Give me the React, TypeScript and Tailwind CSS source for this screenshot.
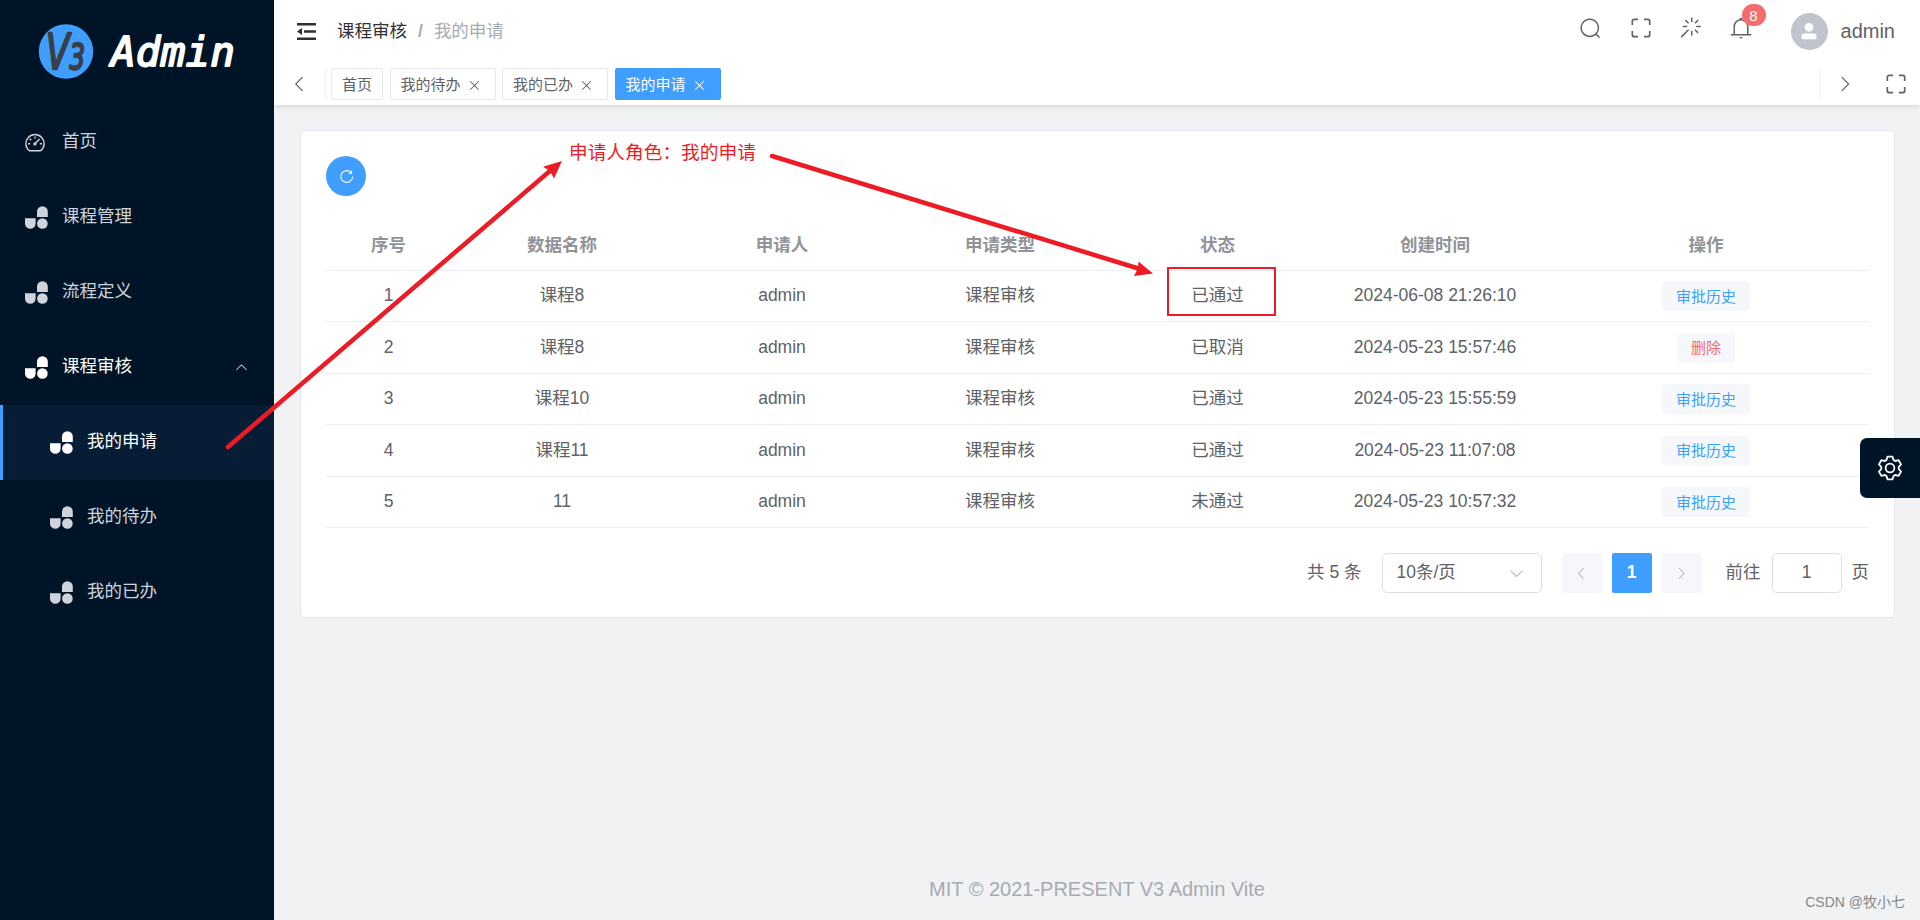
import type { ReactNode } from "react";

const paths = {
  search:
    "m795.904 750.72 124.992 124.928a32 32 0 0 1-45.248 45.248L750.656 795.904a416 416 0 1 1 45.248-45.248zM480 832a352 352 0 1 0 0-704 352 352 0 0 0 0 704",
  bell: "M512 64a64 64 0 0 1 64 64v64H448v-64a64 64 0 0 1 64-64M256 768h512V448a256 256 0 1 0-512 0zm256-640a320 320 0 0 1 320 320v384H192V448a320 320 0 0 1 320-320M96 768h832q32 0 32 32t-32 32H96q-32 0-32-32t32-32m352 128h128a64 64 0 0 1-128 0",
  magic:
    "M512 64h64v192h-64zm0 576h64v192h-64zM160 480v-64h192v64zm576 0v-64h192v64zM249.856 199.04l45.248-45.184L430.848 289.6 385.6 334.848 249.856 199.104zM657.152 606.4l45.248-45.248 135.744 135.744-45.248 45.248zM114.048 923.2 68.8 877.952l316.8-316.8 45.248 45.248zM702.4 334.848 657.152 289.6l135.744-135.744 45.248 45.248z",
  left: "M609.408 149.376 277.76 489.6a32 32 0 0 0 0 44.672l331.648 340.352a29.12 29.12 0 0 0 41.728 0 30.592 30.592 0 0 0 0-42.752L339.264 511.936l311.872-319.872a30.592 30.592 0 0 0 0-42.688 29.12 29.12 0 0 0-41.728 0z",
  right:
    "M340.864 149.312a30.592 30.592 0 0 0 0 42.752L652.736 512 340.864 831.872a30.592 30.592 0 0 0 0 42.752 29.12 29.12 0 0 0 41.728 0L714.24 534.336a32 32 0 0 0 0-44.672L382.592 149.376a29.12 29.12 0 0 0-41.728 0z",
  down: "M831.872 340.864 512 652.672 192.128 340.864a30.592 30.592 0 0 0-42.752 0 29.12 29.12 0 0 0 0 41.6L489.664 714.24a32 32 0 0 0 44.672 0l340.288-331.712a29.12 29.12 0 0 0 0-41.728 30.592 30.592 0 0 0-42.752 0z",
  close:
    "M764.288 214.592 512 466.88 259.712 214.592a31.936 31.936 0 0 0-45.12 45.12L466.752 512 214.528 764.224a31.936 31.936 0 1 0 45.12 45.184L512 557.184l252.288 252.288a31.936 31.936 0 0 0 45.12-45.12L557.12 512.064l252.288-252.352a31.936 31.936 0 1 0-45.12-45.184z",
  refresh:
    "M784.512 230.272v-50.56a32 32 0 1 1 64 0v149.056a32 32 0 0 1-32 32H667.52a32 32 0 1 1 0-64h92.992A320 320 0 1 0 524.8 833.152a320 320 0 0 0 320-320h64a384 384 0 0 1-384 384 384 384 0 0 1-384-384 384 384 0 0 1 643.712-282.88z",
  user: "M288 320a224 224 0 1 0 448 0 224 224 0 1 0-448 0m544 608H160a32 32 0 0 1-32-32v-96a160 160 0 0 1 160-160h448a160 160 0 0 1 160 160v96a32 32 0 0 1-32 32z",
  setting:
    "M600.704 64a32 32 0 0 1 30.464 22.208l35.2 109.376c14.784 7.232 28.928 15.36 42.432 24.512l112.384-24.192a32 32 0 0 1 34.432 15.36L944.32 364.8a32 32 0 0 1-4.032 37.504l-77.12 85.12a357.12 357.12 0 0 1 0 49.024l77.12 85.248a32 32 0 0 1 4.032 37.504l-88.704 153.6a32 32 0 0 1-34.432 15.296L708.8 803.904c-13.44 9.088-27.648 17.28-42.368 24.512l-35.264 109.376A32 32 0 0 1 600.704 960H423.296a32 32 0 0 1-30.464-22.208L357.696 828.48a351.616 351.616 0 0 1-42.56-24.64l-112.32 24.256a32 32 0 0 1-34.432-15.36L79.68 659.2a32 32 0 0 1 4.032-37.504l77.12-85.248a357.12 357.12 0 0 1 0-48.896l-77.12-85.248A32 32 0 0 1 79.68 364.8l88.704-153.6a32 32 0 0 1 34.432-15.296l112.32 24.256c13.568-9.152 27.776-17.408 42.56-24.64l35.2-109.312A32 32 0 0 1 423.232 64H600.64zm-23.424 64H446.72l-36.352 113.088-24.512 11.968a294.113 294.113 0 0 0-34.816 20.096l-22.656 15.36-116.224-25.088-65.28 113.152 79.68 88.192-1.92 27.136a293.12 293.12 0 0 0 0 40.192l1.92 27.136-79.808 88.192 65.344 113.152 116.224-25.024 22.656 15.296a294.113 294.113 0 0 0 34.816 20.096l24.512 11.968L446.72 896h130.688l36.48-113.152 24.448-11.904a288.282 288.282 0 0 0 34.752-20.096l22.592-15.296 116.288 25.024 65.28-113.152-79.744-88.192 1.92-27.136a293.12 293.12 0 0 0 0-40.256l-1.92-27.136 79.808-88.128-65.344-113.152-116.288 24.96-22.592-15.232a287.616 287.616 0 0 0-34.752-20.096l-24.448-11.904L577.344 128zM512 320a192 192 0 1 1 0 384 192 192 0 0 1 0-384m0 64a128 128 0 1 0 0 256 128 128 0 0 0 0-256",
};

function Icon({ name, className }: { name: keyof typeof paths; className: string }) {
  return (
    <svg viewBox="0 0 1024 1024" fill="currentColor" className={`shrink-0 ${className}`}>
      <path d={paths[name]} />
    </svg>
  );
}

function FullscreenIcon() {
  return (
    <svg viewBox="0 0 20 20" className="size-5 shrink-0" fill="none" stroke="currentColor" strokeWidth="1.7">
      <path d="M1.3 7V3.3a2 2 0 0 1 2-2H7M13 1.3h3.7a2 2 0 0 1 2 2V7M18.7 13v3.7a2 2 0 0 1-2 2H13M7 18.7H3.3a2 2 0 0 1-2-2V13" />
    </svg>
  );
}

function DashboardIcon() {
  return (
    <svg viewBox="0 0 20 20" className="size-5" fill="none" stroke="currentColor" strokeWidth="1.4">
      <path d="M4.4 17.8a9.1 9.1 0 1 1 11.2 0z" strokeLinejoin="round" />
      <path d="M10 3.4v2M3 10.8h2.2M14.8 10.8H17M4.8 5.8l1.4 1.4M9.7 11l4.9-5" />
      <circle cx="9.9" cy="10.9" r="0.9" fill="currentColor" />
    </svg>
  );
}

function ComponentIcon() {
  return (
    <svg viewBox="0 0 23 23" className="size-[23px]" fill="currentColor">
      <path d="M12 11V5.6a5.4 5.4 0 0 1 10.8 0V11zM0 12.2h10.6v5.2a5.3 5.3 0 0 1-10.6 0z" />
      <circle cx="17.4" cy="17.5" r="5.3" />
    </svg>
  );
}

const menu = [
  { label: "首页", home: true },
  { label: "课程管理" },
  { label: "流程定义" },
  { label: "课程审核", open: true },
];

const subMenu = [
  { label: "我的申请", active: true },
  { label: "我的待办" },
  { label: "我的已办" },
];

const tags = [
  { label: "首页", fixed: true },
  { label: "我的待办" },
  { label: "我的已办" },
  { label: "我的申请", active: true },
];

const columns = ["序号", "数据名称", "申请人", "申请类型", "状态", "创建时间", "操作"];

const rows = [
  { name: "课程8", status: "已通过", time: "2024-06-08 21:26:10" },
  { name: "课程8", status: "已取消", time: "2024-05-23 15:57:46", removable: true },
  { name: "课程10", status: "已通过", time: "2024-05-23 15:55:59" },
  { name: "课程11", status: "已通过", time: "2024-05-23 11:07:08" },
  { name: "11", status: "未通过", time: "2024-05-23 10:57:32" },
];

const cols = "grid grid-cols-[125px_222px_218px_218px_217px_218px_324px] items-center text-center";

function Sidebar() {
  return (
    <aside className="w-[274px] shrink-0 bg-[#001428] text-[#cfd3dc]">
      <div className="flex h-[105px] items-start pt-2 pl-[38px]">
        <svg viewBox="0 -16 200 84" className="h-[84px] w-[200px]">
          <circle cx="28" cy="27.5" r="27.2" fill="#409eff" />
          <text
            x="8"
            y="45"
            fill="#39404c"
            stroke="#39404c"
            strokeWidth="2.4"
            strokeLinejoin="round"
            fontFamily="DejaVu Sans"
            fontStyle="italic"
            textLength="39"
            lengthAdjust="spacingAndGlyphs"
          >
            <tspan fontSize="49">V</tspan>
            <tspan fontSize="35">3</tspan>
          </text>
          <text
            x="73"
            y="42"
            fill="#fff"
            stroke="#fff"
            strokeWidth="1.8"
            strokeLinejoin="round"
            fontFamily="DejaVu Sans Mono"
            fontStyle="italic"
            fontSize="41"
            textLength="124"
          >
            Admin
          </text>
        </svg>
      </div>
      {menu.map((item) => (
        <div key={item.label} className={`flex h-[75px] items-center pl-[25px] ${item.open ? "text-white" : ""}`}>
          <span className="flex w-[23px]">{item.home ? <DashboardIcon /> : <ComponentIcon />}</span>
          <span className="-mt-px ml-3.5">{item.label}</span>
          {item.open && <Icon name="down" className="mr-[25px] ml-auto size-[15px] rotate-180 text-[#cfd3dc]" />}
        </div>
      ))}
      {subMenu.map((item) => (
        <div
          key={item.label}
          className={`flex h-[75px] items-center border-l-3 pl-[47px] ${
            item.active ? "border-[#409eff] bg-[#061d35] text-white" : "border-transparent"
          }`}
        >
          <ComponentIcon />
          <span className="-mt-0.5 ml-3.5">{item.label}</span>
        </div>
      ))}
    </aside>
  );
}

function Navbar() {
  return (
    <div className="flex h-[62px] items-center pl-[23px]">
      <svg viewBox="0 0 19 17" className="h-[17px] w-[19px]" fill="#303133">
        <path d="M0 0h19v2.6H0zM7 7.2h12v2.6H7zM0 14.4h19V17H0zM0 8.500l5-3.400v6.800z" />
      </svg>
      <div className="mt-px ml-[21px] flex items-center">
        <span className="text-[#303133]">课程审核</span>
        <span className="mx-[11px] font-bold text-[#a8abb2]">/</span>
        <span className="text-[#a8abb2]">我的申请</span>
      </div>
      <div className="mr-[25px] ml-auto flex items-center text-[#606266]">
        <div className="mr-[38px] -mt-1.5 flex items-center">
          <Icon name="search" className="mr-[29px] size-[23px]" />
          <FullscreenIcon />
          <Icon name="magic" className="mr-[26px] ml-7 size-6" />
          <div className="relative">
            <Icon name="bell" className="size-6" />
            <span className="absolute -top-3 left-[13px] flex h-[22px] w-6 items-center justify-center rounded-full bg-[#f56c6c] text-[15px] text-white">
              8
            </span>
          </div>
        </div>
        <span className="flex size-[37px] items-center justify-center rounded-full bg-[#c0c4cc] text-white">
          <Icon name="user" className="size-5" />
        </span>
        <span className="ml-[13px] text-xl">admin</span>
      </div>
    </div>
  );
}

function TagsView() {
  return (
    <div className="flex h-11 items-center text-[15px] text-[#606266]">
      <div className="flex h-8 w-[52px] items-center justify-center border-r border-[#f1f1f2]">
        <Icon name="left" className="size-5" />
      </div>
      <div className="ml-[5px] flex">
        {tags.map((tag) => (
          <div
            key={tag.label}
            className={`mr-[6.5px] flex h-8 items-center rounded-xs border px-2.5 ${
              tag.active ? "border-[#409eff] bg-[#409eff] text-white" : "border-[#e4e7ed]"
            }`}
          >
            {tag.label}
            {!tag.fixed && <Icon name="close" className="mt-0.5 mr-[3px] ml-1.5 size-[15px]" />}
          </div>
        ))}
      </div>
      <div className="ml-auto flex h-8 w-[101px] items-center border-l border-[#f1f1f2]">
        <Icon name="right" className="ml-[15px] size-5" />
        <span className="mr-3.5 ml-auto">
          <FullscreenIcon />
        </span>
      </div>
    </div>
  );
}

function PagerButton({ children, active }: { children: ReactNode; active?: boolean }) {
  return (
    <span
      className={`flex size-10 items-center justify-center rounded-xs ${
        active ? "bg-[#409eff] font-bold text-white" : "bg-[#f5f7fa] text-[#a8abb2]"
      }`}
    >
      {children}
    </span>
  );
}

function Pagination() {
  return (
    <div className="mt-[25px] flex h-10 items-center justify-end">
      <span>共 5 条</span>
      <div className="ml-5 flex h-10 w-40 items-center justify-between rounded-[5px] border border-[#dcdfe6] px-3.5">
        10条/页
        <Icon name="down" className="mr-0.5 size-[17px] text-[#a8abb2]" />
      </div>
      <div className="ml-5 flex gap-2.5">
        <PagerButton>
          <Icon name="left" className="size-[15px]" />
        </PagerButton>
        <PagerButton active>1</PagerButton>
        <PagerButton>
          <Icon name="right" className="size-[15px]" />
        </PagerButton>
      </div>
      <span className="mr-[11px] ml-6">前往</span>
      <span className="mr-2.5 flex h-10 w-[70px] items-center justify-center rounded-[5px] border border-[#dcdfe6]">1</span>
      <span>页</span>
    </div>
  );
}

function ApplyTable() {
  return (
    <div className="mt-[23px]">
      <div className={`${cols} h-[52px] border-b border-[#ebeef5] pt-0.5 font-bold text-[#909399]`}>
        {columns.map((c) => (
          <span key={c}>{c}</span>
        ))}
      </div>
      {rows.map((row, i) => (
        <div key={row.time} className={`${cols} border-b border-[#ebeef5] ${i % 2 ? "h-[52px]" : "h-[51px]"}`}>
          <span>{i + 1}</span>
          <span>{row.name}</span>
          <span>admin</span>
          <span>课程审核</span>
          <span>{row.status}</span>
          <span>{row.time}</span>
          <span
            className={`flex h-[30px] items-center justify-self-center rounded-[4px] bg-[#f5f7fa] px-3.5 text-[15px] ${
              row.removable ? "text-[#f56c6c]" : "text-[#409eff]"
            }`}
          >
            {row.removable ? "删除" : "审批历史"}
          </span>
        </div>
      ))}
    </div>
  );
}

// red guide arrows drawn over the page
function Annotations() {
  return (
    <>
      <svg viewBox="0 0 1920 920" className="pointer-events-none absolute inset-0 size-full" fill="#ed1c24">
        <g stroke="#ed1c24" strokeWidth="4.5" strokeLinecap="round">
          <path d="M228 447 551 170" />
          <path d="M772 156l368 113" />
        </g>
        <path d="M562 161l-19 5.700 7 4.300 4 7.500z" />
        <path d="M1153 273.500l-14.500-12-.5 6.500-4 8z" />
        <rect x="1168" y="268" width="107" height="47" fill="none" stroke="#ed1c24" strokeWidth="2" />
      </svg>
      <p className="absolute top-[139px] left-[569px] text-[18.7px] leading-7 whitespace-nowrap text-[#ed1c24]">
        申请人角色：我的申请
      </p>
    </>
  );
}

export default function App() {
  return (
    <div className="relative flex h-[920px] w-[1920px] overflow-hidden bg-[#f0f2f4] font-['Liberation_Sans','Noto_Sans_CJK_SC',sans-serif] text-[17.5px] leading-none text-[#606266]">
      <Sidebar />
      <div className="flex min-w-0 flex-1 flex-col">
        <header className="h-[105px] bg-white shadow-[0_1px_6px_rgba(0,0,0,0.14)]">
          <Navbar />
          <TagsView />
        </header>
        <main className="mr-[25px] ml-[26px] mt-[25px] h-[488px] rounded-[5px] border border-[#e4e7ed] bg-white px-[25px] pt-[25px]">
          <button className="flex size-10 items-center justify-center rounded-full bg-[#409eff] text-white">
            <Icon name="refresh" className="size-[17px]" />
          </button>
          <ApplyTable />
          <Pagination />
        </main>
        <footer className="mt-auto pb-[21px] text-center text-xl leading-5 text-[#a8abb2]">
          MIT © 2021-PRESENT V3 Admin Vite
        </footer>
      </div>
      <div className="absolute top-[438px] right-0 flex size-[60px] items-center justify-center rounded-l-[7px] bg-[#001428] text-white">
        <Icon name="setting" className="size-7" />
      </div>
      <span className="absolute right-[15px] bottom-2 text-sm text-[#888]">CSDN @牧小七</span>
      <Annotations />
    </div>
  );
}
